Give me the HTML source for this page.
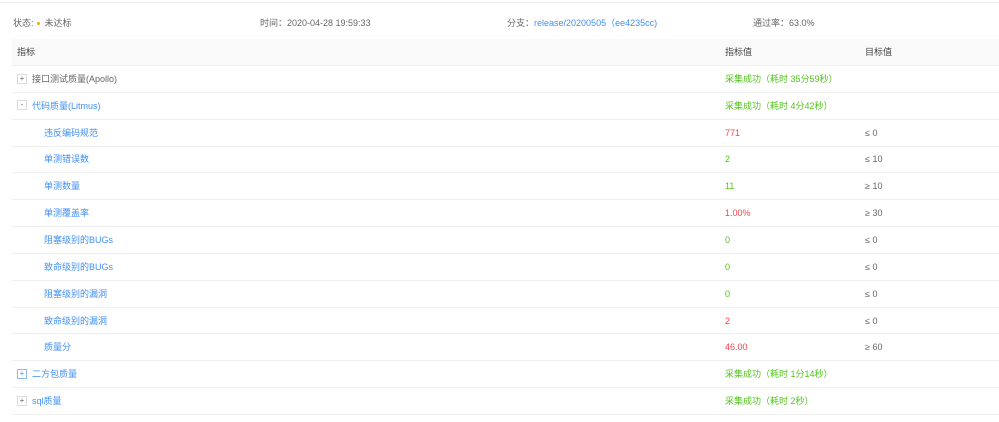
<!DOCTYPE html>
<html><head><meta charset="utf-8"><style>
body{margin:0;width:999px;height:422px;background:#fff;font-family:"Liberation Sans","Noto Sans CJK SC",sans-serif;font-size:9px;color:#666;overflow:hidden;position:relative}
.top{position:absolute;left:0;right:0;top:2px;height:1px;background:#eee}
.info{position:absolute;top:17px;height:12px;line-height:12px}
.dot{display:inline-block;width:3px;height:3px;border-radius:50%;background:#f5a623;margin:0 5px 1px 3px;vertical-align:middle}
.blue{color:#3f8ff7}.green{color:#52c41a}.red{color:#f5424b}
table{position:absolute;left:12px;top:39px;width:987px;border-collapse:collapse}
td{height:25.85px;border-bottom:1px solid #eee;padding:0;white-space:nowrap;line-height:12px}
tr.h td{background:#fafafa;color:#444;height:26px}
td.c1{padding-left:5px}
td.c2{width:140px}td.c3{width:134px}
.ch{padding-left:32px!important}
.tg{display:inline-block;width:8px;height:8px;border:1px solid #ddd;text-align:center;line-height:8px;font-size:8px;color:#666;margin-right:5px;vertical-align:middle;position:relative;top:-1px}
.tg.b{border-color:#8bbcf7;color:#3f8ff7}
</style></head><body>
<div class="top"></div>
<div class="info" style="left:13px">状态:<span class="dot"></span>未达标</div>
<div class="info" style="left:260px">时间：2020-04-28 19:59:33</div>
<div class="info" style="left:507px">分支：<span class="blue">release/20200505（ee4235cc)</span></div>
<div class="info" style="left:753px">通过率：63.0%</div>
<table>
<tr class="h"><td class="c1">指标</td><td class="c2">指标值</td><td class="c3">目标值</td></tr>
<tr><td class="c1"><span class="tg">+</span>接口测试质量(Apollo)</td><td class="c2 green">采集成功（耗时 35分59秒）</td><td></td></tr>
<tr><td class="c1 blue"><span class="tg">-</span>代码质量(Litmus)</td><td class="c2 green">采集成功（耗时 4分42秒）</td><td></td></tr>
<tr><td class="c1 ch blue">违反编码规范</td><td class="red">771</td><td>≤ 0</td></tr>
<tr><td class="c1 ch blue">单测错误数</td><td class="green">2</td><td>≤ 10</td></tr>
<tr><td class="c1 ch blue">单测数量</td><td class="green">11</td><td>≥ 10</td></tr>
<tr><td class="c1 ch blue">单测覆盖率</td><td class="red">1.00%</td><td>≥ 30</td></tr>
<tr><td class="c1 ch blue">阻塞级别的BUGs</td><td class="green">0</td><td>≤ 0</td></tr>
<tr><td class="c1 ch blue">致命级别的BUGs</td><td class="green">0</td><td>≤ 0</td></tr>
<tr><td class="c1 ch blue">阻塞级别的漏洞</td><td class="green">0</td><td>≤ 0</td></tr>
<tr><td class="c1 ch blue">致命级别的漏洞</td><td class="red">2</td><td>≤ 0</td></tr>
<tr><td class="c1 ch blue">质量分</td><td class="red">46.00</td><td>≥ 60</td></tr>
<tr><td class="c1 blue"><span class="tg b">+</span>二方包质量</td><td class="green">采集成功（耗时 1分14秒）</td><td></td></tr>
<tr><td class="c1 blue"><span class="tg">+</span>sql质量</td><td class="green">采集成功（耗时 2秒）</td><td></td></tr>
</table>
</body></html>
